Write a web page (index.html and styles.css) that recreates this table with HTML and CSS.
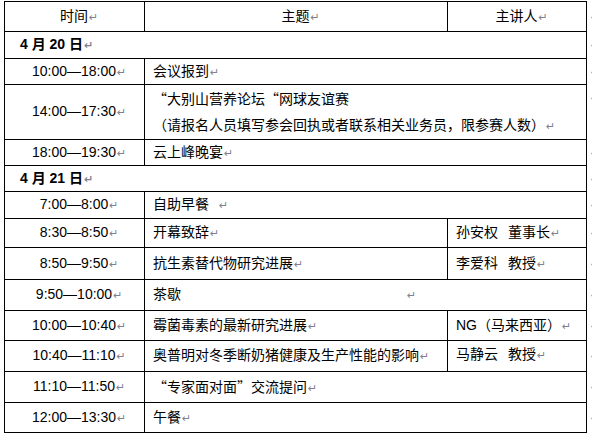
FILE: index.html
```html
<!DOCTYPE html>
<html lang="zh-CN">
<head>
<meta charset="utf-8">
<title>会议日程</title>
<link rel="stylesheet" href="styles.css">
</head>
<body>
<table class="agenda">
  <colgroup>
    <col class="c1"><col class="c2"><col class="c3"><col class="c4">
  </colgroup>
  <tr class="h30">
    <td class="ctr">时间<span class="m">↵</span></td>
    <td class="ctr">主题<span class="m">↵</span></td>
    <td class="ctr">主讲人<span class="m">↵</span></td>
    <td class="end"><span class="m">↵</span></td>
  </tr>
  <tr class="h27">
    <td class="date" colspan="3">4 月 20 日<span class="m">↵</span></td>
    <td class="end"><span class="m">↵</span></td>
  </tr>
  <tr class="h26">
    <td class="ctr">10:00—18:00<span class="m">↵</span></td>
    <td colspan="2">会议报到<span class="m">↵</span></td>
    <td class="end"><span class="m">↵</span></td>
  </tr>
  <tr class="h52">
    <td class="ctr">14:00—17:30<span class="m">↵</span></td>
    <td colspan="2" class="two"><span class="cjk">“</span>大别山营养论坛<span class="cjk">“</span>网球友谊赛<br><span class="cjk">（请报名人员填写参会回执或者联系相关业务员，限参赛人数）</span><span class="m">↵</span></td>
    <td class="end top"><span class="m">↵</span></td>
  </tr>
  <tr class="h26">
    <td class="ctr">18:00—19:30<span class="m">↵</span></td>
    <td colspan="2">云上峰晚宴<span class="m">↵</span></td>
    <td class="end"><span class="m">↵</span></td>
  </tr>
  <tr class="h26">
    <td class="date" colspan="3">4 月 21 日<span class="m">↵</span></td>
    <td class="end"><span class="m">↵</span></td>
  </tr>
  <tr class="h27">
    <td class="ctr">7:00—8:00<span class="m">↵</span></td>
    <td colspan="2">自助早餐 <span class="m gap">↵</span></td>
    <td class="end"><span class="m">↵</span></td>
  </tr>
  <tr class="h29">
    <td class="ctr">8:30—8:50<span class="m">↵</span></td>
    <td>开幕致辞<span class="m">↵</span></td>
    <td>孙安权<span class="sp"></span>董事长<span class="m">↵</span></td>
    <td class="end"><span class="m">↵</span></td>
  </tr>
  <tr class="h32">
    <td class="ctr">8:50—9:50<span class="m">↵</span></td>
    <td>抗生素替代物研究进展<span class="m">↵</span></td>
    <td>李爱科<span class="sp"></span>教授<span class="m">↵</span></td>
    <td class="end"><span class="m">↵</span></td>
  </tr>
  <tr class="h31">
    <td class="ctr">9:50—10:00<span class="m">↵</span></td>
    <td colspan="2">茶歇<span class="m far">↵</span></td>
    <td class="end"><span class="m">↵</span></td>
  </tr>
  <tr class="h30">
    <td class="ctr">10:00—10:40<span class="m">↵</span></td>
    <td>霉菌毒素的最新研究进展<span class="m">↵</span></td>
    <td>NG<span class="cjk">（马来西亚）</span><span class="m">↵</span></td>
    <td class="end"><span class="m">↵</span></td>
  </tr>
  <tr class="h31">
    <td class="ctr">10:40—11:10<span class="m">↵</span></td>
    <td>奥普明对冬季断奶猪健康及生产性能的影响<span class="m">↵</span></td>
    <td class="hi">马静云<span class="sp"></span>教授<span class="m">↵</span></td>
    <td class="end"><span class="m">↵</span></td>
  </tr>
  <tr class="h31">
    <td class="ctr">11:10—11:50<span class="m">↵</span></td>
    <td colspan="2" class="cjk">“专家面对面”交流提问<span class="m">↵</span></td>
    <td class="end"><span class="m">↵</span></td>
  </tr>
  <tr class="h30">
    <td class="ctr">12:00—13:30<span class="m">↵</span></td>
    <td colspan="2">午餐<span class="m">↵</span></td>
    <td class="end"><span class="m">↵</span></td>
  </tr>
  <tr class="h30">
    <td class="ctr"></td>
    <td></td>
    <td></td>
    <td class="end"></td>
  </tr>
</table>
</body>
</html>
```
FILE: styles.css
```css
html, body {
  margin: 0;
  padding: 0;
  overflow: hidden;
  background: #ffffff;
}

body {
  font-family: "Liberation Sans", "Noto Sans CJK SC", sans-serif;
  font-size: 14px;
  color: #000000;
}

.agenda {
  border-collapse: collapse;
  table-layout: fixed;
  width: 602px;
  margin: 1px 0 0 4px;
}

.c1 { width: 140px; }
.c2 { width: 303px; }
.c3 { width: 139px; }
.c4 { width: 20px; }

.agenda td {
  border: 1px solid #000000;
  padding: 0 8px;
  line-height: 18px;
  vertical-align: middle;
  white-space: nowrap;
  overflow: visible;
}

.agenda td.end {
  border: none;
  padding: 0 0 0 3px;
}

.agenda td.top {
  vertical-align: top;
  padding-top: 3px;
}

.h26 { height: 26px; }
.h27 { height: 27px; }
.h29 { height: 29px; }
.h30 { height: 30px; }
.h31 { height: 31px; }
.h32 { height: 32px; }
.h52 { height: 52px; }

.ctr { text-align: center; }

.date {
  font-weight: bold;
  padding-left: 15px !important;
}

.agenda td.two {
  line-height: 25px;
  padding-top: 1px;
}

.cjk {
  font-family: "Noto Sans CJK SC", sans-serif;
}

.agenda td.hi {
  vertical-align: top;
  padding-top: 4px;
}

.sp {
  display: inline-block;
  width: 10px;
}

.m {
  display: inline-block;
  width: 0;
  font-family: "DejaVu Sans", sans-serif;
  font-size: 11px;
  color: #80808e;
  padding-left: 1px;
}

.m.gap { padding-left: 6px; }
.m.far { padding-left: 226px; }
```
